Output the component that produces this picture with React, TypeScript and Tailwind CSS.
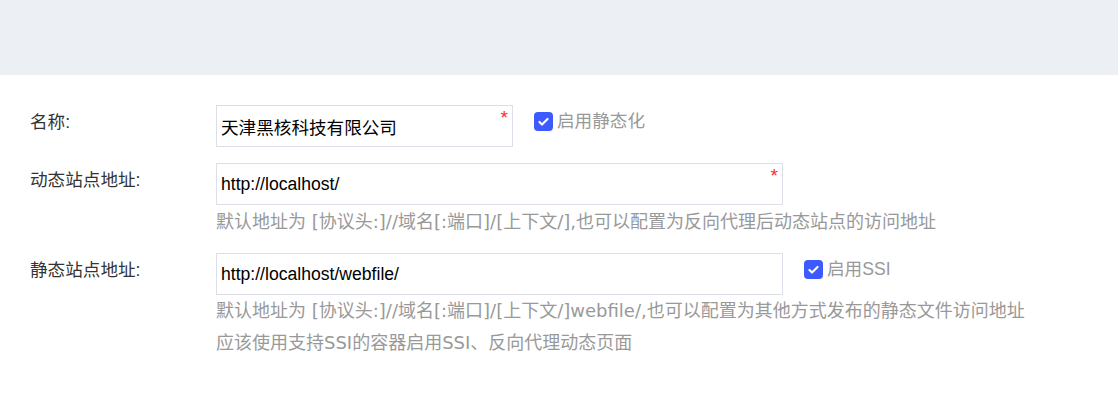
import { useState } from "react"

function Check({ label, defaultChecked = true }: { label: string; defaultChecked?: boolean }) {
  const [on, setOn] = useState(defaultChecked)
  return (
    <label className="flex items-center gap-[4px] cursor-pointer select-none">
      <span
        onClick={() => setOn(!on)}
        className={`w-[19px] h-[19px] rounded-[4px] flex items-center justify-center ${on ? "bg-[#3d5afe]" : "border border-gray-400 bg-white"}`}
      >
        {on && (
          <svg width="13" height="13" viewBox="0 0 16 16" fill="none">
            <path d="M3 8.5l3.2 3.2L13 4.8" stroke="white" strokeWidth="2.6" strokeLinecap="round" strokeLinejoin="round" />
          </svg>
        )}
      </span>
      <span className="text-[17.6px] text-[#999]">{label}</span>
    </label>
  )
}

function Field({ value, width, required }: { value: string; width: string; required?: boolean }) {
  return (
    <div className={`relative ${width} h-[42px] border border-[#dcdfe8] bg-white shrink-0`}>
      <input
        defaultValue={value}
        className="w-full h-full px-[4px] text-[17.6px] text-black outline-none bg-transparent"
      />
      {required && <span className="absolute right-[4px] top-[2px] text-[#ff2a2a] text-[19px] leading-none">*</span>}
    </div>
  )
}

const help = "text-[18px] text-[#999] leading-[32px] font-['DejaVu_Sans','Noto_Sans_CJK_SC',sans-serif]"

export default function App() {
  return (
    <div className="min-h-screen bg-white font-['Liberation_Sans','Noto_Sans_CJK_SC',sans-serif]">
      <div className="h-[75px] bg-[#eceff4]"></div>

      <div className="pl-[30px] pt-[30px] flex flex-col">
        <div className="flex">
          <div className="w-[186px] pt-[4px] text-[17.6px] text-[#333]">名称:</div>
          <Field value="天津黑核科技有限公司" width="w-[297px]" required />
          <div className="ml-[21px] pt-[3px] self-start">
            <Check label="启用静态化" />
          </div>
        </div>

        <div className="flex mt-[16px]">
          <div className="w-[186px] pt-[4px] text-[17.6px] text-[#333]">动态站点地址:</div>
          <div className="flex flex-col">
            <Field value="http://localhost/" width="w-[567px]" required />
            <div className={`${help} mt-[1px]`}>
              默认地址为 [协议头:]//域名[:端口]/[上下文/],也可以配置为反向代理后动态站点的访问地址
            </div>
          </div>
        </div>

        <div className="flex mt-[15px]">
          <div className="w-[186px] pt-[4px] text-[17.6px] text-[#333]">静态站点地址:</div>
          <div className="flex flex-col">
            <div className="flex items-start">
              <Field value="http://localhost/webfile/" width="w-[567px]" />
              <div className="ml-[21px] pt-[3px]">
                <Check label="启用SSI" />
              </div>
            </div>
            <div className={help}>
              <div>默认地址为 [协议头:]//域名[:端口]/[上下文/]webfile/,也可以配置为其他方式发布的静态文件访问地址</div>
              <div>应该使用支持SSI的容器启用SSI、反向代理动态页面</div>
            </div>
          </div>
        </div>
      </div>
    </div>
  )
}
